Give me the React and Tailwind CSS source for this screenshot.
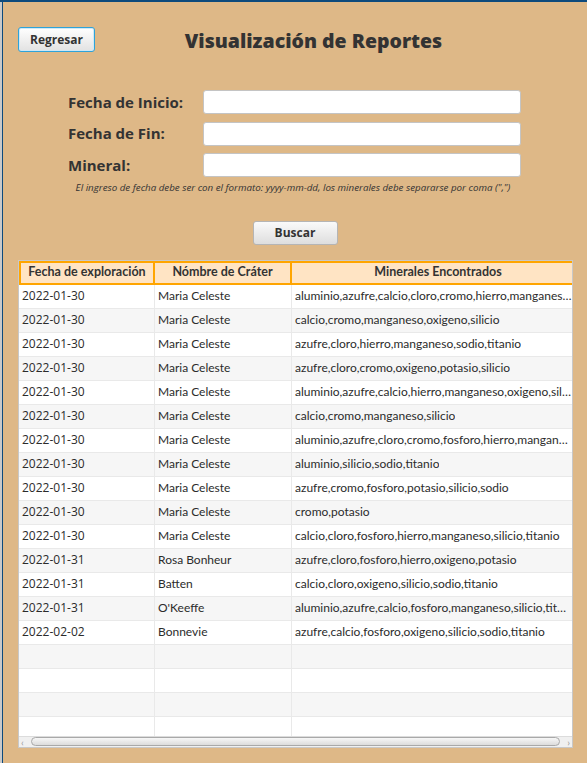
import React from "react";

const rows = [
  ["2022-01-30", "Maria Celeste", "aluminio,azufre,calcio,cloro,cromo,hierro,manganeso,oxigeno,silicio"],
  ["2022-01-30", "Maria Celeste", "calcio,cromo,manganeso,oxigeno,silicio"],
  ["2022-01-30", "Maria Celeste", "azufre,cloro,hierro,manganeso,sodio,titanio"],
  ["2022-01-30", "Maria Celeste", "azufre,cloro,cromo,oxigeno,potasio,silicio"],
  ["2022-01-30", "Maria Celeste", "aluminio,azufre,calcio,hierro,manganeso,oxigeno,silicio"],
  ["2022-01-30", "Maria Celeste", "calcio,cromo,manganeso,silicio"],
  ["2022-01-30", "Maria Celeste", "aluminio,azufre,cloro,cromo,fosforo,hierro,manganeso"],
  ["2022-01-30", "Maria Celeste", "aluminio,silicio,sodio,titanio"],
  ["2022-01-30", "Maria Celeste", "azufre,cromo,fosforo,potasio,silicio,sodio"],
  ["2022-01-30", "Maria Celeste", "cromo,potasio"],
  ["2022-01-30", "Maria Celeste", "calcio,cloro,fosforo,hierro,manganeso,silicio,titanio"],
  ["2022-01-31", "Rosa Bonheur", "azufre,cloro,fosforo,hierro,oxigeno,potasio"],
  ["2022-01-31", "Batten", "calcio,cloro,oxigeno,silicio,sodio,titanio"],
  ["2022-01-31", "O'Keeffe", "aluminio,azufre,calcio,fosforo,manganeso,silicio,titanio"],
  ["2022-02-02", "Bonnevie", "azufre,calcio,fosforo,oxigeno,silicio,sodio,titanio"],
  ["", "", ""],
  ["", "", ""],
  ["", "", ""],
  ["", "", ""],
];

function Field({ label }) {
  return (
    <div className="flex items-center h-[24px]">
      <span className="w-[135px] text-[15px] font-bold text-[#333]">{label}</span>
      <div className="w-[318px] h-[24px] bg-white border border-[#c4c4c4] rounded-[3px]" />
    </div>
  );
}

export default function App() {
  return (
    <div className="w-[587px] h-[763px] overflow-hidden flex flex-col bg-[#deb887]" style={{ fontFamily: '"Open Sans", "Noto Sans", sans-serif' }}>
      <div className="h-[2px] bg-[#0d4a7c] shrink-0" />
      <div className="flex flex-1 min-h-0">
        <div className="w-[2px] bg-[#c9c9c9]" />
        <div className="w-[1px] bg-[#0d4a7c]" />
        <div className="flex-1 flex flex-col">
          {/* header */}
          <div className="relative flex justify-center pt-[26px] h-[52px]">
            <button className="absolute left-[15px] top-[25px] w-[77px] h-[25px] rounded-[3px] border border-[#2ea3d9] bg-gradient-to-b from-white to-[#e2e2e2] text-[12px] font-bold text-[#333] shadow-[inset_0_0_0_1px_#cfe8f5]">
              Regresar
            </button>
            <h1 className="text-[19.5px] font-extrabold text-[#333] leading-[26px] ml-[37px]">Visualización de Reportes</h1>
          </div>

          {/* form */}
          <div className="flex flex-col gap-[7.5px] pl-[65px] mt-[36px]">
            <Field label="Fecha de Inicio:" />
            <Field label="Fecha de Fin:" />
            <Field label="Mineral:" />
          </div>
          <p className="text-[9.75px] italic text-[#333] text-center mt-[4px] pr-[4px]">
            El ingreso de fecha debe ser con el formato: yyyy-mm-dd, los minerales debe separarse por coma (",")
          </p>
          <div className="flex justify-center mt-[25px]">
            <button className="w-[85px] h-[24px] rounded-[3px] border border-[#b5b5b5] bg-gradient-to-b from-[#fafafa] to-[#dedede] text-[12px] font-bold text-[#333]">
              Buscar
            </button>
          </div>

          {/* table */}
          <div className="mt-[15px] ml-[15px] w-[555px] h-[488px] border border-[#c8c8c8] bg-white flex flex-col overflow-hidden" style={{ fontFamily: 'Lato, "Open Sans", sans-serif' }}>
            <div className="flex h-[24px] shrink-0 bg-[#ffe4c4] text-[12.5px] font-bold text-[#333]">
              <div className="w-[136px] shrink-0 border-2 border-[#ffa500] flex items-center justify-center">Fecha de exploración</div>
              <div className="w-[137px] shrink-0 border-y-2 border-r-2 border-[#ffa500] flex items-center justify-center">Nómbre de Cráter</div>
              <div className="w-[292px] shrink-0 border-y-2 border-[#ffa500] flex items-center justify-center">Minerales Encontrados</div>
            </div>
            <div className="flex-1 min-h-0 overflow-hidden">
              {rows.map((r, i) => (
                <div key={i} className={`flex h-[24px] text-[12px] text-[#2b2b2b] border-b border-[#e9e9e9] ${i % 2 === 0 ? "bg-white" : "bg-[#f6f6f6]"}`}>
                  <div className="w-[136px] shrink-0 border-r border-[#e9e9e9] px-[3px] flex items-center font-['Open_Sans']">{r[0]}</div>
                  <div className="w-[137px] shrink-0 border-r border-[#e9e9e9] px-[3px] flex items-center">{r[1]}</div>
                  <div className="w-[280px] shrink-0 pl-[3px] flex items-center overflow-hidden">
                    <span className="whitespace-nowrap overflow-hidden text-ellipsis">{r[2]}</span>
                  </div>
                </div>
              ))}
            </div>
            <div className="h-[11px] shrink-0 flex items-center bg-[#f0f0f0] border-t border-[#dcdcdc] px-[2px] gap-[2px]">
              <span className="text-[10px] leading-none text-[#999] w-[8px]">‹</span>
              <div className="flex-1 h-[9px] rounded-full border border-[#a9a9a9] bg-gradient-to-b from-[#f7f7f7] to-[#dcdcdc]" />
              <span className="text-[10px] leading-none text-[#999] w-[8px] text-right">›</span>
            </div>
          </div>
        </div>
      </div>
    </div>
  );
}
